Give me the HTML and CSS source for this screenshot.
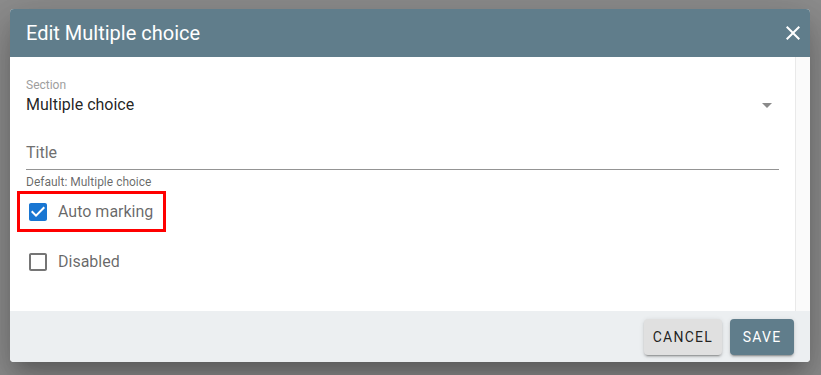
FILE: index.html
```html
<!DOCTYPE html>
<html>
<head>
<meta charset="utf-8">
<link rel="stylesheet" href="styles.css">
</head>
<body>
<div class="dialog">
  <div class="header">
    <div class="title">Edit Multiple choice</div>
    <svg class="close" viewBox="0 0 24 24" width="24" height="24"><path fill="#fff" d="M19 6.41L17.59 5 12 10.59 6.41 5 5 6.41 10.59 12 5 17.59 6.41 19 12 13.41 17.59 19 19 17.59 13.41 12z"/></svg>
  </div>
  <div class="main">
    <div class="content">
      <div class="label">Section</div>
      <div class="select">
        <span class="value">Multiple choice</span>
        <svg class="arrow" viewBox="0 0 24 24" width="24" height="24"><path fill="#8a8a8a" d="M7 10l5 5 5-5z"/></svg>
      </div>
      <div class="input">Title</div>
      <div class="helper">Default: Multiple choice</div>
      <div class="row marked">
        <svg class="cb" viewBox="0 0 24 24" width="24" height="24"><path fill="#1976d2" d="M19 3H5c-1.11 0-2 .9-2 2v14c0 1.1.89 2 2 2h14c1.11 0 2-.9 2-2V5c0-1.1-.89-2-2-2zm-9 14l-5-5 1.41-1.41L10 14.17l7.59-7.59L19 8l-9 9z"/></svg>
        <span class="rowtext">Auto marking</span>
      </div>
      <div class="row second">
        <svg class="cb" viewBox="0 0 24 24" width="24" height="24"><path fill="#757575" d="M19 5v14H5V5h14m0-2H5c-1.1 0-2 .9-2 2v14c0 1.1.9 2 2 2h14c1.1 0 2-.9 2-2V5c0-1.1-.9-2-2-2z"/></svg>
        <span class="rowtext">Disabled</span>
      </div>
    </div>
    <div class="track"></div>
  </div>
  <div class="footer">
    <button class="btn cancel">Cancel</button>
    <button class="btn save">Save</button>
  </div>
</div>
</body>
</html>
```
FILE: styles.css
```css
html, body {
  margin: 0;
  padding: 0;
}
body {
  background: #8d8d8d;
  font-family: Roboto, "Liberation Sans", sans-serif;
  width: 821px;
  height: 375px;
  overflow: hidden;
}
.dialog {
  margin: 9px 0 0 10px;
  width: 800px;
  height: 353px;
  border-radius: 4px;
  overflow: hidden;
  background: #fff;
  display: flex;
  flex-direction: column;
  box-shadow: 0px 11px 15px -7px rgba(0,0,0,0.2), 0px 24px 38px 3px rgba(0,0,0,0.14), 0px 9px 46px 8px rgba(0,0,0,0.12);
}
.header {
  height: 48px;
  flex: none;
  background: #607d8b;
  display: flex;
  align-items: center;
  justify-content: space-between;
  padding: 0 5px 0 16px;
}
.title {
  color: #fff;
  font-size: 20px;
  line-height: 24px;
  font-weight: 400;
}
.close {
  display: block;
}
.main {
  height: 254px;
  flex: none;
  display: flex;
}
.content {
  flex: 1;
  padding: 22px 16px 0 16px;
}
.track {
  width: 14px;
  background: #fafafa;
  border-left: 1px solid #e9e9e9;
}
.label {
  font-size: 12px;
  line-height: 12px;
  color: #9e9e9e;
}
.select {
  margin-top: 4px;
  height: 20px;
  display: flex;
  align-items: center;
  justify-content: space-between;
}
.value {
  font-size: 16px;
  line-height: 20px;
  color: rgba(0,0,0,0.87);
}
.arrow {
  display: block;
}
.input {
  margin-top: 28px;
  font-size: 16px;
  line-height: 20px;
  color: #707070;
  padding-bottom: 6px;
  border-bottom: 1px solid #949494;
}
.helper {
  margin-top: 3px;
  font-size: 12px;
  line-height: 18px;
  color: rgba(0,0,0,0.6);
}
.row {
  margin-left: -9px;
  width: 149px;
  height: 41px;
  box-sizing: border-box;
  border: 3px solid transparent;
  display: flex;
  align-items: center;
  padding-left: 6px;
  gap: 8px;
}
.row.marked {
  border-color: #ff0000;
}
.row.second {
  margin-top: 9px;
}
.cb {
  display: block;
  flex: none;
}
.rowtext {
  font-size: 16px;
  line-height: 20px;
  color: rgba(0,0,0,0.6);
}
.footer {
  flex: 1;
  background: #eceff1;
  display: flex;
  justify-content: flex-end;
  align-items: flex-start;
  padding: 8px 16px 0 0;
  gap: 8px;
}
.btn {
  height: 36px;
  min-width: 64px;
  padding: 0 9px;
  border: none;
  border-radius: 4px;
  font-family: Roboto, "Liberation Sans", sans-serif;
  font-size: 14px;
  font-weight: 400;
  letter-spacing: 1.25px;
  text-transform: uppercase;
  box-shadow: 0px 3px 1px -2px rgba(0,0,0,0.2), 0px 2px 2px 0px rgba(0,0,0,0.14), 0px 1px 5px 0px rgba(0,0,0,0.12);
}
.cancel {
  background: #e0e0e0;
  color: rgba(0,0,0,0.87);
}
.save {
  background: #607d8b;
  color: #fff;
}
```
